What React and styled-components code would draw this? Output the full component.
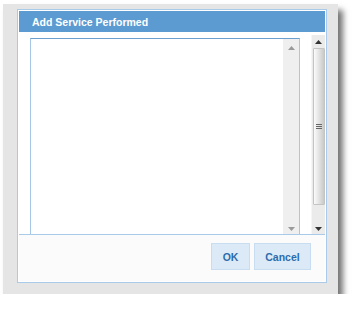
import React from "react";
import styled, { createGlobalStyle } from "styled-components";

const Global = createGlobalStyle`
  html, body { margin: 0; padding: 0; background: #ffffff; }
  body { font-family: "Liberation Sans", Arial, sans-serif; }
`;

const Page = styled.div`
  padding: 4px 0 0 3px;
`;

const Frame = styled.div`
  box-sizing: border-box;
  width: 335px;
  height: 290px;
  background: #e5e5e5;
  padding: 5px 11px 11px 14px;
  box-shadow: 5px 6px 6px rgba(0, 0, 0, 0.55);
`;

const Dialog = styled.div`
  box-sizing: border-box;
  width: 310px;
  height: 274px;
  border: 1px solid #a9cbe9;
  background: #ffffff;
  padding: 1px;
  display: flex;
  flex-direction: column;
`;

const Header = styled.div`
  height: 21px;
  line-height: 23px;
  background: #5b9bd2;
  color: #ffffff;
  font-family: "Liberation Sans", Arial, sans-serif;
  font-weight: bold;
  font-size: 10.5px;
  padding-left: 13px;
`;

const Body = styled.div`
  flex: 1;
  display: flex;
  align-items: flex-start;
  padding-left: 11px;
`;

const TextBox = styled.div`
  box-sizing: border-box;
  margin-top: 6px;
  width: 271px;
  height: 196px;
  border: 1px solid #a6c7e6;
  border-top-color: #6c9fd0;
  border-bottom: none;
  background: #ffffff;
  display: flex;
  justify-content: flex-end;
`;

const InnerScroll = styled.div`
  width: 16px;
  background: #efefef;
  display: flex;
  flex-direction: column;
  justify-content: space-between;
  align-items: center;
  padding: 7px 0 3px;
`;

const OuterScroll = styled.div`
  box-sizing: border-box;
  margin-left: 11px;
  margin-top: 3px;
  width: 14px;
  height: 199px;
  background: #ebebeb;
  border-left: 1px solid #f6f6f6;
  display: flex;
  flex-direction: column;
  align-items: center;
  padding: 5px 0 3px;
`;

const Thumb = styled.div`
  box-sizing: border-box;
  margin: 4px 0 0;
  width: 12px;
  height: 157px;
  border: 1px solid #c4c4c4;
  border-radius: 1px;
  background: linear-gradient(to right, #fbfbfb, #e0e0e0 55%, #c9c9c9);
  display: flex;
  align-items: center;
  justify-content: center;
`;

const Grip = styled.div`
  display: flex;
  flex-direction: column;
  gap: 1px;
  & > span {
    display: block;
    width: 6px;
    height: 1px;
    background: #666;
  }
`;

const Spacer = styled.div`
  flex: 1;
`;

const Pane = styled.div`
  height: 47px;
  box-sizing: border-box;
  border-top: 1px solid #a9cbe9;
  background: #fbfbfb;
  display: flex;
  justify-content: flex-end;
  align-items: flex-start;
  gap: 4px;
  padding: 8px 14px 0 0;
`;

const Button = styled.button`
  box-sizing: border-box;
  width: ${(p) => p.$w}px;
  height: 27px;
  margin: 0;
  padding: 0;
  border: 1px solid #c9ddf1;
  background: #dceaf8;
  color: #2d6cab;
  font-family: "Liberation Sans", Arial, sans-serif;
  font-weight: bold;
  font-size: 10.5px;
`;

const Tri = ({ down, color, w = 7, h = 4 }) => (
  <svg width={w} height={h} viewBox={`0 0 ${w} ${h}`} style={{ display: "block" }}>
    {down ? (
      <polygon points={`0,0 ${w},0 ${w / 2},${h}`} fill={color} />
    ) : (
      <polygon points={`0,${h} ${w},${h} ${w / 2},0`} fill={color} />
    )}
  </svg>
);

export default function App() {
  return (
    <>
      <Global />
      <Page>
        <Frame>
          <Dialog>
            <Header>Add Service Performed</Header>
            <Body>
              <TextBox>
                <InnerScroll>
                  <Tri color="#9a9a9a" />
                  <Tri down color="#9a9a9a" />
                </InnerScroll>
              </TextBox>
              <OuterScroll>
                <Tri color="#333" />
                <Thumb>
                  <Grip>
                    <span />
                    <span />
                    <span />
                  </Grip>
                </Thumb>
                <Spacer />
                <Tri down color="#333" />
              </OuterScroll>
            </Body>
            <Pane>
              <Button $w={39}>OK</Button>
              <Button $w={57}>Cancel</Button>
            </Pane>
          </Dialog>
        </Frame>
      </Page>
    </>
  );
}
